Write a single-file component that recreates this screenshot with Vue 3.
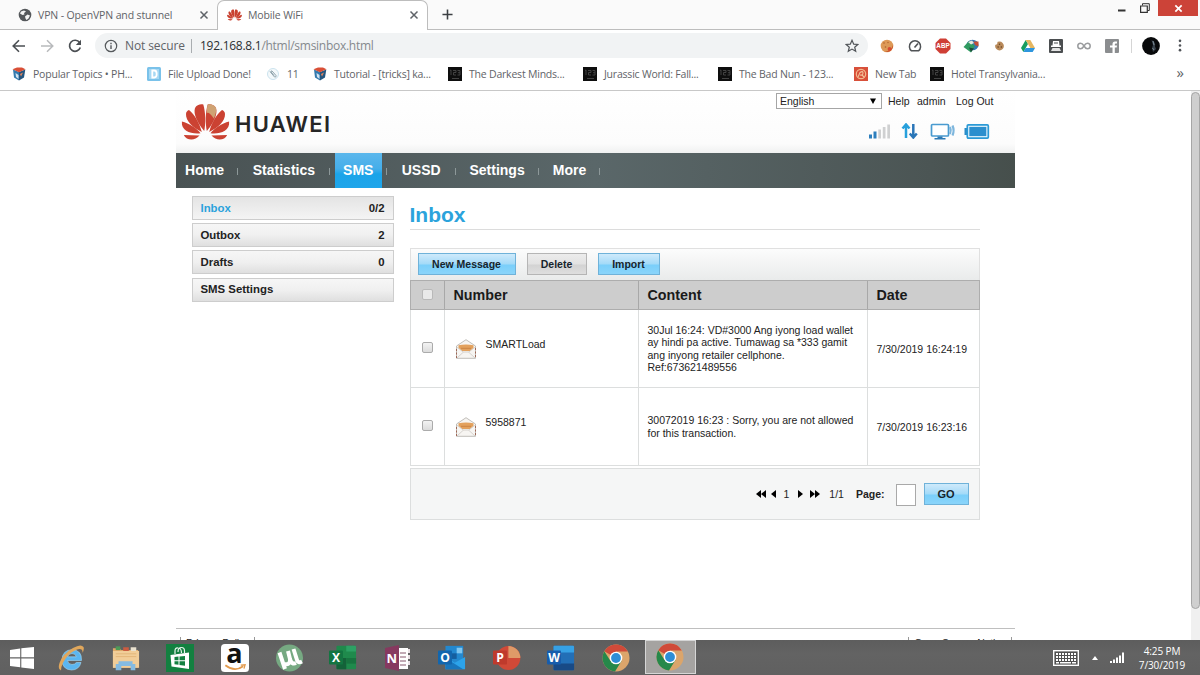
<template>
  <div class="screen">
    <!-- icon sprite -->
    <svg class="sprite">
      <symbol id="globe" viewBox="0 0 14 14">
        <circle cx="7" cy="7" r="6.3" fill="#55585b" />
        <path d="M3 3.5L6 2.5L8 3.5L6 5L6.500 6.500L4.500 7L2 5.500Z M7 8.500L9.500 6.500L12 7.500L10.500 10.500L8.500 12L7.500 10.500Z" fill="#f4f4f4" />
      </symbol>
      <symbol id="petals" viewBox="0 0 48 38">
        <g id="petal-half">
          <path d="M22.700 28C16 20 11.500 11 13.500 5C15 1.800 19 .8 21.800 1.500C24.300 10 24.200 21 22.700 28Z" />
          <path d="M20.300 29C12 25 4 18 4.500 11C4.500 9 6 7.500 7.500 7C13.500 12 18 20 20.300 29Z" />
          <path d="M19 30.300C10 31.500 -.5 28 .3 18.500C8 20.500 15 25 19 30.300Z" />
          <path d="M18 32.500L2.300 32C5 37.500 13 38.500 18 32.500Z" />
        </g>
        <use href="#petal-half" transform="translate(48 0) scale(-1 1)" />
      </symbol>
      <symbol id="cross" viewBox="0 0 10 10">
        <path d="M1.500 1.500L8.500 8.500M8.500 1.500L1.500 8.500" stroke="#5f6368" stroke-width="1.500" />
      </symbol>
      <symbol id="cube" viewBox="0 0 14 14">
        <path d="M1 2.500L7 5V13.500L2 10.500Z" fill="#3479ad" />
        <path d="M7 5L13.300 2.500L12 10.500L7 13.500Z" fill="#24557f" />
        <path d="M.5 2.200L5 .5L10 .6L13.500 2.200L7 5.200Z" fill="#d94f36" />
        <path d="M3.500 6L6.500 8V12L4 10Z" fill="#cfe3f2" />
        <path d="M8 7L11 5.500L9 9.500Z" fill="#e9895f" />
      </symbol>
      <symbol id="dfile" viewBox="0 0 14 14">
        <rect width="14" height="14" rx="1.500" fill="#7ac2ea" />
        <rect x="2" y="2" width="10" height="10" fill="#a6d8f3" />
        <path d="M5.300 3.500H7.300C10.500 3.500 10.500 10.500 7.300 10.500H5.300Z" fill="none" stroke="#fff" stroke-width="1.800" />
      </symbol>
      <symbol id="clip" viewBox="0 0 14 14">
        <circle cx="7" cy="7" r="5.500" fill="#f4f9fb" stroke="#bfdcea" stroke-width=".8" />
        <path d="M4 4.500L8.500 10Q10.500 10.500 10 8.500L6 4Q4.500 3.500 5 5L8 8.500" fill="none" stroke="#8fa3ac" />
      </symbol>
      <symbol id="movies" viewBox="0 0 14 14">
        <rect width="14" height="14" fill="#0e0e0e" />
        <path d="M2 3.500L3 3V8M5 3.500H8V5.500H5.500V8H8M9.500 3.500H12V8H9.500M10 5.700H12M4 11.500H11" fill="none" stroke="#484848" stroke-width=".9" />
      </symbol>
      <symbol id="swirl" viewBox="0 0 14 14">
        <rect width="14" height="14" fill="#d8503a" />
        <circle cx="7" cy="7" r="4.700" fill="none" stroke="#f2b98e" stroke-width="1.200" />
        <path d="M4 10L6 5.500Q9 3.500 9 6T6 8M8 8L10 10" fill="none" stroke="#f2c29a" stroke-width="1.100" />
      </symbol>

      <!-- extensions -->
      <symbol id="cookie" viewBox="0 0 14 14">
        <circle cx="7" cy="7" r="6.300" fill="#dd9a58" />
        <path d="M13 6A6.300 6.300 0 0 1 5 12.800Q11 12 13 6" fill="#c8582e" />
        <g fill="#b0622c"><circle cx="4" cy="4" r=".8" /><circle cx="8" cy="3.500" r=".7" /><circle cx="5.500" cy="8" r=".8" /></g>
        <circle cx="9.500" cy="10" r="1.900" fill="#d64a32" />
      </symbol>
      <symbol id="gauge" viewBox="0 0 14 14">
        <path d="M3.500 11.800A5.600 5.600 0 1 1 10.500 11.800Z" fill="none" stroke="#505356" stroke-width="1.500" />
        <path d="M6.500 8.500L10 4.500" stroke="#505356" stroke-width="1.700" />
      </symbol>
      <symbol id="abp" viewBox="0 0 16 16">
        <path d="M5 .5H11L15.500 5V11L11 15.500H5L.5 11V5Z" fill="#cf3f35" />
        <text x="8" y="10.400" text-anchor="middle" font-size="6.300" font-weight="700" fill="#fff" font-family="Liberation Sans, sans-serif">ABP</text>
      </symbol>
      <symbol id="idm" viewBox="0 0 16 14">
        <ellipse cx="9.500" cy="6" rx="6" ry="5.300" fill="#3678b2" />
        <path d="M.5 8L6 2L12 7L8 13.500Z" fill="#2f9a61" />
        <path d="M5 3L9 1.500L11 4L8 5.500Z" fill="#e6e8de" />
        <path d="M10.500 2.500H15.500V7.500L12 6Z" fill="#c44e37" />
        <path d="M6 8.500L11 9.500L8 13Z" fill="#1d4b39" />
      </symbol>
      <symbol id="bite" viewBox="0 0 12 12">
        <circle cx="6" cy="6" r="4.800" fill="#b98a5a" />
        <circle cx="1.800" cy="2.500" r="2" fill="#fff" />
        <g fill="#634020"><circle cx="6" cy="4" r=".8" /><circle cx="4.500" cy="7" r=".8" /><circle cx="8" cy="7" r=".8" /></g>
      </symbol>
      <symbol id="drive" viewBox="0 0 14 13">
        <path d="M4.700 .5L0 8.500L2.400 12.500L7 4.400Z" fill="#189d5d" />
        <path d="M4.700 .5H9.300L14 8.500H9.300Z" fill="#e5b660" />
        <path d="M4.700 8.500H14L11.700 12.500H2.400Z" fill="#2e96de" />
      </symbol>
      <symbol id="spy" viewBox="0 0 14 14">
        <rect width="14" height="14" rx="1" fill="#4b4e50" />
        <path d="M4 2H10L10.500 6.500H12V8H2V6.500H3.500Z" fill="#fff" />
        <path d="M5 4H9" stroke="#4b4e50" />
        <path d="M2 12L3.500 9H10.500L12 12Z" fill="#e4e4e4" />
      </symbol>
      <symbol id="infinity" viewBox="0 0 14 8">
        <path d="M7 4C5.500 1.500 4.800 1.200 3.600 1.200A2.700 2.700 0 0 0 3.600 6.800C4.800 6.800 5.500 6.500 7 4S9.200 1.200 10.400 1.200A2.700 2.700 0 0 1 10.400 6.800C9.200 6.800 8.500 6.500 7 4Z" fill="none" stroke="#9a9c9e" stroke-width="1.500" />
      </symbol>
      <symbol id="fb" viewBox="0 0 14 14">
        <rect width="14" height="14" rx="1" fill="#8b8d8f" />
        <path d="M7.500 14V8.500H5V6.500H7.500V5Q7.500 2.500 10 2.500H12V4.500H10.800Q9.800 4.500 9.800 5.500V6.500H12L11.700 8.500H9.800V14Z" fill="#fff" />
      </symbol>

      <!-- taskbar -->
      <symbol id="ie" viewBox="0 0 28 28">
        <path d="M24.500 16.500H10.500Q11 20.500 15 20.500Q18 20.500 19.300 18.500H24Q22 26 14.500 26Q5 25.500 5 15.800Q5.500 6 15 5.700Q25 6 24.500 16.500ZM10.500 12.800H19.300Q18.500 9.500 15 9.500T10.500 12.800Z" fill="#5bb6f0" stroke="#a5daf7" stroke-width=".6" />
        <path d="M4 26.500Q.5 25.500 2.500 19Q6 9.500 16 4Q24 -.5 26.500 3Q27.500 5 25.500 9Q26 5 22.500 5Q18 5 11 11.500Q4 19.500 4 26.500Z" fill="#e0a75c" />
      </symbol>
      <symbol id="folder" viewBox="0 0 30 27">
        <path d="M1 3H8L10 5H28V24H1Z" fill="#dfa968" />
        <path d="M4 1H9V5H4Z" fill="#4d9a57" /><path d="M12 2H18V6H12Z" fill="#cb5c41" /><path d="M20 2H26V6H20Z" fill="#e9e1cf" />
        <path d="M1 6H29V24H1Z" fill="#f1cd98" />
        <path d="M4 9H26M4 12H26" stroke="#dfae70" stroke-width=".8" />
        <path d="M4 26.500V20Q4 20 7 20V17H22V20H25V26.500H20V22H10V26.500Z" fill="#85bbe2" />
      </symbol>
      <symbol id="store" viewBox="0 0 28 28">
        <rect width="28" height="28" fill="#138040" />
        <path d="M9 10V7Q9 3.500 12 4Q15.500 4 15.500 9M12 8Q12 3.500 15.500 3.500Q18.500 3.500 18.500 7V9" fill="none" stroke="#e9f3ec" stroke-width="1.200" />
        <path d="M4.500 11L23 8.500V25L5.500 22.500Z" fill="#fff" />
        <path d="M8.500 13L12.500 12.600V16.200H8.500ZM13.500 12.500L19 12V16.200H13.500ZM8.500 17.200H12.500V20.800L8.500 20.300ZM13.500 17.200H19V21.800L13.500 21Z" fill="#138040" />
      </symbol>
      <symbol id="amazon" viewBox="0 0 29 29">
        <rect width="29" height="29" rx="4" fill="#fff" />
        <text x="14" y="20" text-anchor="middle" font-size="28" font-weight="700" fill="#111" font-family="Open Sans, sans-serif">a</text>
        <path d="M4.500 22Q14 29.500 23 23" fill="none" stroke="#e29a4c" stroke-width="1.800" />
        <path d="M20.500 21.800L25 21.500L23.800 25.500" fill="none" stroke="#e29a4c" stroke-width="1.300" />
      </symbol>
      <symbol id="utorrent" viewBox="0 0 28 28">
        <circle cx="14.500" cy="14" r="13.500" fill="#76a982" />
        <path d="M4.500 8.500L10 25M9 20Q15.500 21.500 15 15L13 7M15 15Q16.500 21 21 19M18.500 5L22 16Q23 19.500 27 17.500" fill="none" stroke="#fff" stroke-width="4" />
      </symbol>
      <symbol id="excel" viewBox="0 0 30 28">
        <rect x="8" y="1" width="21" height="25" rx="1" fill="#1f8a4c" />
        <path d="M18.500 1H28Q29 1 29 2V7H18.500Z" fill="#2da164" /><path d="M8 14H18.500V26H9Q8 26 8 25Z" fill="#146239" /><path d="M18.500 14H29V20H18.500Z" fill="#187440" />
        <rect y="6" width="15" height="15" rx="1" fill="#137541" />
        <text x="7.500" y="17.800" text-anchor="middle" class="letter">X</text>
      </symbol>
      <symbol id="onenote" viewBox="0 0 28 28">
        <path d="M14 4H24V25H14Z" fill="#fff" /><path d="M16 9H22M16 13H22M16 17H22M16 21H22" stroke="#86566c" />
        <path d="M24 5H26V9H24ZM24 11H26V15H24ZM24 17H26V21H24Z" fill="#e8dfe4" />
        <path d="M1 4L15 1V27L1 24Z" fill="#86395f" />
        <text x="7.700" y="18.600" text-anchor="middle" class="letter">N</text>
      </symbol>
      <symbol id="outlook" viewBox="0 0 30 28">
        <rect x="8" y="1" width="19" height="20" fill="#2388cf" /><path d="M20 3H26V9H20Z" fill="#80c5ef" /><path d="M14 9H20V15H14Z" fill="#155e9f" />
        <path d="M8 13L18 19L29 13V26H8Z" fill="#2ca3ea" /><path d="M8 14L27 26H8Z" fill="#1976bd" />
        <rect y="6" width="15" height="15" rx="1" fill="#1266ae" />
        <text x="7.500" y="17.800" text-anchor="middle" class="letter">O</text>
      </symbol>
      <symbol id="powerpoint" viewBox="0 0 30 28">
        <circle cx="16.500" cy="14" r="12.800" fill="#d04937" /><path d="M16.500 1.200A12.800 12.800 0 0 1 29.300 14H16.500Z" fill="#df9a68" />
        <rect y="6" width="15" height="15" rx="1" fill="#bf3a2c" />
        <text x="7.700" y="17.800" text-anchor="middle" class="letter">P</text>
      </symbol>
      <symbol id="word" viewBox="0 0 30 28">
        <rect x="7" y="1" width="22" height="26" rx="1" fill="#226fb7" /><path d="M7 2Q7 1 8 1H28Q29 1 29 2V8H7Z" fill="#36a1e5" /><path d="M7 20H29V26Q29 27 28 27H8Q7 27 7 26Z" fill="#184a86" />
        <rect y="6" width="15" height="15" rx="1" fill="#175dac" />
        <text x="7.500" y="17.800" text-anchor="middle" class="letter">W</text>
      </symbol>
      <symbol id="chrome" viewBox="0 0 28 28">
        <circle cx="14" cy="14" r="13.500" fill="#dba56b" />
        <path d="M14 14L2.300 7.200A13.500 13.500 0 0 1 25.800 7.500H14Z" fill="#d04a39" />
        <path d="M14 14L8.500 17L2.300 7.200A13.500 13.500 0 0 0 13 27.500L19.500 17Z" fill="#26884a" />
        <circle cx="14" cy="14" r="6.300" fill="#fff" /><circle cx="14" cy="14" r="4.900" fill="#2e8ed6" />
      </symbol>
      <symbol id="envelope" viewBox="0 0 20 20">
        <path d="M.5 7L10 .7L19.500 7V19.300H.5Z" fill="#f7f5f2" stroke="#b9b5b1" stroke-width=".9" />
        <path d="M2.500 6.300Q10 4.500 17.500 6.300V9L14 12H6L2.500 9Z" fill="#e3a15d" />
        <path d="M5.500 9.300H14.500" stroke="#b5682b" stroke-dasharray="1 1" />
        <path d="M.7 8L7.500 13.200M19.300 8L12.500 13.200M1 19L7.500 13H12.500L19 19" fill="none" stroke="#cdc9c4" stroke-width=".8" />
        <path d="M.5 10V19M19.500 9V19" stroke="#9b5d49" stroke-dasharray="2 1.500" stroke-width=".9" />
      </symbol>
    </svg>

    <!-- tab strip -->
    <div class="tabstrip">
      <div class="tab">
        <svg class="fav"><use href="#globe" /></svg>
        <span class="tab-title">VPN - OpenVPN and stunnel</span>
        <svg class="tab-close"><use href="#cross" /></svg>
      </div>
      <div class="tab active">
        <svg class="fav red"><use href="#petals" /></svg>
        <span class="tab-title">Mobile WiFi</span>
        <svg class="tab-close"><use href="#cross" /></svg>
      </div>
      <svg class="new-tab" viewBox="0 0 12 12"><path d="M6 .5V11.500M.5 6H11.500" stroke="#3c4043" stroke-width="1.700" /></svg>
      <div class="win-controls">
        <svg class="win-min" viewBox="0 0 8 12"><path d="M0 10.500H7.500" stroke="#333" stroke-width="2" /></svg>
        <svg class="win-max" viewBox="0 0 10 10"><path d="M2.500 2.500V.7H9.300V7.500H7.500" fill="none" stroke="#333" /><path d="M.6 3H7.300V9.300H.6Z" fill="none" stroke="#333" stroke-width="1.200" /></svg>
        <div class="win-close">
          <svg viewBox="0 0 10 10"><path d="M1.500 1.500L8.500 8.500M8.500 1.500L1.500 8.500" stroke="#fff" stroke-width="1.900" /></svg>
        </div>
      </div>
    </div>

    <!-- address bar -->
    <div class="toolbar">
      <svg class="tool" viewBox="0 0 14 14"><path d="M13 7H1.500M7 1.200L1.200 7L7 12.800" fill="none" stroke="#4b4f53" stroke-width="1.600" /></svg>
      <svg class="tool" viewBox="0 0 14 14"><path d="M1 7H12.500M7 1.200L12.800 7L7 12.800" fill="none" stroke="#b8babc" stroke-width="1.500" /></svg>
      <svg class="tool" viewBox="0 0 14 14"><path d="M11.600 3.600A5.500 5.500 0 1 0 12.300 8.500" fill="none" stroke="#4b4f53" stroke-width="1.700" /><path d="M13 .8V6H7.800Z" fill="#4b4f53" /></svg>
      <div class="omnibox">
        <svg class="info" viewBox="0 0 14 14"><circle cx="7" cy="7" r="5.700" fill="none" stroke="#55595c" stroke-width="1.200" /><path d="M7 6.200V10M7 3.800V5.200" stroke="#55595c" stroke-width="1.400" /></svg>
        <span class="insecure">Not secure</span>
        <span class="bar"></span>
        <span class="url">192.168.8.1<i>/html/smsinbox.html</i></span>
        <svg class="star" viewBox="0 0 14 14"><path d="M7 1.300L8.700 5.200L12.800 5.500L9.700 8.200L10.700 12.300L7 10.100L3.300 12.300L4.300 8.200L1.200 5.500L5.300 5.200Z" fill="none" stroke="#505458" stroke-width="1.200" /></svg>
      </div>
      <div class="extensions">
        <span v-for="ext in extensions" :key="ext" class="ext"><svg :class="ext"><use :href="'#' + ext" /></svg></span>
      </div>
      <span class="divider"></span>
      <svg class="avatar" viewBox="0 0 18 18"><circle cx="9" cy="9" r="8.900" fill="#08090b" /><path d="M9.500 3Q14 5 13 9.500L14 12L11 15L10 11L11 8Z" fill="#39424c" /><path d="M11 4L12 8M10.500 11L12 13" stroke="#7c8b96" /></svg>
      <svg class="menu" viewBox="0 0 4 14"><g fill="#505458"><circle cx="2" cy="2" r="1.400" /><circle cx="2" cy="7" r="1.400" /><circle cx="2" cy="12" r="1.400" /></g></svg>
    </div>

    <!-- bookmarks -->
    <div class="bookmarks">
      <div v-for="mark in bookmarks" :key="mark.title" class="bookmark" :style="{ width: mark.width + 'px' }">
        <svg><use :href="'#' + mark.icon" /></svg>
        <span>{{ mark.title }}</span>
      </div>
      <span class="overflow">»</span>
    </div>

    <!-- page -->
    <div class="viewport">
      <div class="page">
        <header class="header">
          <div class="brand">
            <svg class="brand-mark" viewBox="0 0 48 38">
              <use href="#petals" width="48" height="38" />
              <path d="M25.300 10C25.300 6 25.700 3.500 26.200 1.500C29 .8 33 1.800 34.500 5C35.300 8 34 12 32.300 15.500Q28 9 25.300 10Z" fill="#cfa273" />
            </svg>
            <span class="brand-name">HUAWEI</span>
          </div>
          <div class="header-right">
            <div class="links">
              <div class="lang"><span>English</span><svg viewBox="0 0 6 6"><path d="M0 .5H6L3 6Z" /></svg></div>
              <a class="help">Help</a><a class="user">admin</a><a>Log Out</a>
            </div>
            <div class="status">
              <svg class="signal" viewBox="0 0 22 15">
                <path d="M0 10.500H3V14.500H0ZM4.500 7.500H7.500V14.500H4.500Z" fill="#2d7fbd" />
                <path d="M9.300 5.500H12V14.500H9.300ZM13.800 3H16.500V14.500H13.800ZM18.300 .5H21V14.500H18.300Z" fill="#cfd0d1" />
              </svg>
              <svg class="traffic" viewBox="0 0 16 16"><path d="M4.500 15V3M1 5.500L4.500 1.500L8 5.500" fill="none" stroke="#27a0dc" stroke-width="2.500" /><path d="M11.800 1V13M8.300 10.500L11.800 14.500L15.300 10.500" fill="none" stroke="#2a76b8" stroke-width="2.500" /></svg>
              <svg class="wlan" viewBox="0 0 25 17"><rect x="1" y="1.500" width="17" height="11.500" rx="1" fill="#fff" stroke="#4a9bd0" stroke-width="1.700" /><path d="M7 13.500H12V15H15V16.500H4V15H7Z" fill="#2c79b4" /><path d="M19.500 4Q21 7.500 19.500 11M22 2.500Q24.200 7.500 22 12.500" fill="none" stroke="#7db6dd" stroke-width="2.200" /></svg>
              <svg class="battery" viewBox="0 0 25 15"><path d="M0 4H2.500V11H0Z" fill="#2b8cc8" /><rect x="2.800" y=".9" width="21" height="13.200" rx="1" fill="#e6f4fc" stroke="#2b9ad6" stroke-width="1.700" /><rect x="4.800" y="2.900" width="17" height="9.200" fill="#2b8fce" /></svg>
            </div>
          </div>
        </header>

        <nav class="nav">
          <template v-for="item in menu" :key="item.label">
            <div class="nav-item" :class="{ current: item.label === 'SMS' }" :style="{ width: item.width + 'px' }">{{ item.label }}</div>
            <span class="nav-sep"></span>
          </template>
        </nav>

        <div class="body">
          <aside class="side">
            <div v-for="box in boxes" :key="box.label" class="side-item" :class="{ selected: box.label === current }" @click="current = box.label">
              <span>{{ box.label }}</span><span>{{ box.count }}</span>
            </div>
          </aside>

          <main class="content">
            <h1>Inbox</h1>
            <div class="actions">
              <button class="btn blue new">New Message</button>
              <button class="btn gray">Delete</button>
              <button class="btn blue import">Import</button>
            </div>
            <div class="row head">
              <div class="cell check"><span class="box"></span></div>
              <div class="cell">Number</div>
              <div class="cell">Content</div>
              <div class="cell">Date</div>
            </div>
            <div v-for="msg in messages" :key="msg.number" class="row">
              <div class="cell check"><span class="box"></span></div>
              <div class="cell number"><svg><use href="#envelope" /></svg><span>{{ msg.number }}</span></div>
              <div class="cell text">{{ msg.content }}</div>
              <div class="cell">{{ msg.date }}</div>
            </div>
            <div class="pager">
              <svg class="dbl" viewBox="0 0 10 8"><path d="M5 0V8L0 4ZM10 0V8L5 4Z" /></svg>
              <svg class="sgl" viewBox="0 0 5 8"><path d="M5 0V8L0 4Z" /></svg>
              <span class="num">1</span>
              <svg class="sgl" viewBox="0 0 5 8"><path d="M0 0V8L5 4Z" /></svg>
              <svg class="dbl next" viewBox="0 0 10 8"><path d="M0 0V8L5 4ZM5 0V8L10 4Z" /></svg>
              <span class="total">1/1</span>
              <b>Page:</b>
              <input v-model="page" />
              <button class="btn blue go">GO</button>
            </div>
          </main>
        </div>

        <footer class="footer">
          <span>Privacy Policy</span>
          <span>Open Source Notice</span>
        </footer>
      </div>
      <div class="scroll"><div class="thumb"></div></div>
    </div>

    <!-- taskbar -->
    <div class="taskbar">
      <div class="start">
        <svg viewBox="0 0 24 22"><path d="M0 3L10.200 1.500V10.300H0ZM11.300 1.300L24 0V10.300H11.300ZM0 11.400H10.200V20.300L0 19ZM11.300 11.400H24V22L11.300 20.500Z" fill="#fff" /></svg>
      </div>
      <div v-for="(app, i) in apps" :key="i" class="app" :class="{ running: i === apps.length - 1 }">
        <svg><use :href="'#' + app" /></svg>
      </div>
      <div class="tray">
        <svg class="keyboard" viewBox="0 0 26 16"><rect x=".7" y=".7" width="24.600" height="14.600" fill="#505050" stroke="#fff" stroke-width="1.400" /><path d="M3 4H23M3 7H23M3 10H23" stroke="#fff" stroke-width="2" stroke-dasharray="2 1" /><path d="M3 12.800H6M7 12.800H18M19 12.800H23" stroke="#fff" stroke-width="1.600" /></svg>
        <svg class="up" viewBox="0 0 6 4"><path d="M0 4L3 0L6 4Z" fill="#fff" /></svg>
        <svg class="net" viewBox="0 0 14 12"><path d="M0 9H2V11H0ZM3 7.500H5V11H3ZM6 5.500H8V11H6ZM9 3.500H11V11H9ZM12 .5H14V11H12Z" fill="#fff" /></svg>
        <div class="clock"><span>4:25 PM</span><span>7/30/2019</span></div>
      </div>
    </div>
  </div>
</template>

<script setup>
import { ref } from 'vue'

const current = ref('Inbox')
const page = ref('')

const extensions = ['cookie', 'gauge', 'abp', 'idm', 'bite', 'drive', 'spy', 'infinity', 'fb']

const bookmarks = [
  { title: 'Popular Topics • PH...', icon: 'cube', width: 135 },
  { title: 'File Upload Done!', icon: 'dfile', width: 119 },
  { title: '11', icon: 'clip', width: 47 },
  { title: 'Tutorial - [tricks] ka...', icon: 'cube', width: 135 },
  { title: 'The Darkest Minds...', icon: 'movies', width: 135 },
  { title: 'Jurassic World: Fall...', icon: 'movies', width: 135 },
  { title: 'The Bad Nun - 123...', icon: 'movies', width: 136 },
  { title: 'New Tab', icon: 'swirl', width: 76 },
  { title: 'Hotel Transylvania...', icon: 'movies', width: 135 }
]

const menu = [
  { label: 'Home', width: 57 },
  { label: 'Statistics', width: 81 },
  { label: 'SMS', width: 47 },
  { label: 'USSD', width: 58 },
  { label: 'Settings', width: 73 },
  { label: 'More', width: 51 }
]

const boxes = [
  { label: 'Inbox', count: '0/2' },
  { label: 'Outbox', count: '2' },
  { label: 'Drafts', count: '0' },
  { label: 'SMS Settings', count: '' }
]

const messages = [
  {
    number: 'SMARTLoad',
    content: '30Jul 16:24: VD#3000 Ang iyong load wallet\nay hindi pa active. Tumawag sa *333 gamit\nang inyong retailer cellphone.\nRef:673621489556',
    date: '7/30/2019 16:24:19'
  },
  {
    number: '5958871',
    content: '30072019 16:23 : Sorry, you are not allowed\nfor this transaction.',
    date: '7/30/2019 16:23:16'
  }
]

const apps = ['ie', 'folder', 'store', 'amazon', 'utorrent', 'excel', 'onenote', 'outlook', 'powerpoint', 'word', 'chrome', 'chrome']
</script>

<style>
body {
  background: #fff;
}
</style>

<style scoped>
.screen {
  display: flex;
  flex-direction: column;
  width: 1200px;
  height: 675px;
  overflow: hidden;
  background: #fff;
  font-family: "Open Sans", "Noto Sans", sans-serif;
  font-size: 10.5px;
  color: #5f6368;
}

.screen * {
  box-sizing: border-box;
}

svg {
  flex-shrink: 0;
  display: block;
}

.sprite {
  display: none;
}

.letter {
  font: 700 13px "Open Sans", sans-serif;
  fill: #fff;
}

/* tab strip */
.tabstrip {
  display: flex;
  height: 30px;
  flex-shrink: 0;
  background: #fafafa;
  border-bottom: 1px solid #bdbdbd;
}

.tab {
  display: flex;
  align-items: center;
  width: 217px;
  height: 29px;
  padding: 0 8px 0 18px;
}

.tab.active {
  width: 211px;
  height: 30px;
  padding: 0 8px 1px 9px;
  background: #fff;
  border: 1px solid #bdbdbd;
  border-bottom: none;
  border-radius: 7px 7px 0 0;
}

.fav {
  width: 14px;
  height: 14px;
}

.fav.red {
  width: 15px;
  fill: #c9402f;
}

.tab-title {
  flex: 1;
  margin-left: 6px;
  letter-spacing: -0.13px;
  white-space: nowrap;
}

.tab-close {
  width: 10px;
  height: 10px;
}

.new-tab {
  width: 11px;
  height: 11px;
  margin: 9px 0 0 14px;
}

.win-controls {
  display: flex;
  margin-left: auto;
  margin-right: 2px;
}

.win-min {
  width: 8px;
  height: 12px;
  margin-right: 14px;
}

.win-max {
  width: 10px;
  height: 10px;
  margin: 3px 8px 0 0;
}

.win-close {
  display: flex;
  align-items: center;
  justify-content: center;
  width: 40px;
  height: 16px;
  background: #cc4338;
}

.win-close svg {
  width: 9px;
  height: 9px;
}

/* address bar */
.toolbar {
  display: flex;
  align-items: center;
  height: 31px;
  flex-shrink: 0;
  padding-left: 12px;
}

.tool {
  width: 14px;
  height: 14px;
  margin-right: 14px;
}

.tool:nth-child(3) {
  margin-right: 13px;
}

.omnibox {
  display: flex;
  align-items: center;
  width: 773px;
  height: 25px;
  padding: 0 9px 0 9px;
  border-radius: 13px;
  background: #f1f3f4;
  font-size: 12px;
}

.info {
  width: 14px;
  height: 14px;
}

.insecure {
  width: 60px;
  margin-left: 7px;
  letter-spacing: -0.1px;
  white-space: nowrap;
}

.bar {
  width: 1px;
  height: 14px;
  margin: 0 8px 0 6px;
  background: #a9adb0;
}

.url {
  color: #2b2e31;
  letter-spacing: -0.27px;
}

.url i {
  font-style: normal;
  color: #85898d;
}

.star {
  width: 14px;
  height: 14px;
  margin-left: auto;
}

.extensions {
  display: flex;
  margin-left: 5px;
}

.ext {
  display: flex;
  align-items: center;
  justify-content: center;
  width: 28.1px;
}

.ext svg {
  width: 14px;
  height: 14px;
}

.ext .abp,
.ext .idm {
  width: 16px;
  height: 16px;
}

.ext .bite {
  width: 11px;
}

.divider {
  width: 1px;
  height: 14px;
  margin-left: 5px;
  background: #d5d5d5;
}

.avatar {
  width: 18px;
  height: 18px;
  margin-left: 10px;
}

.menu {
  width: 4px;
  height: 13px;
  margin-left: 18px;
}

/* bookmarks */
.bookmarks {
  display: flex;
  align-items: center;
  height: 30px;
  flex-shrink: 0;
  padding: 0 0 4px 12px;
  border-bottom: 1px solid #c8c8c8;
}

.bookmark {
  display: flex;
  align-items: center;
  gap: 7px;
  flex-shrink: 0;
  letter-spacing: -0.21px;
  white-space: nowrap;
}

.bookmark svg {
  width: 14px;
  height: 14px;
}

.overflow {
  margin: -2px 16px 0 auto;
  font-size: 15px;
  line-height: 15px;
}

/* page */
.viewport {
  display: flex;
  height: 549px;
  flex-shrink: 0;
  overflow: hidden;
  font-family: "Liberation Sans", Arial, sans-serif;
  color: #222;
}

.page {
  display: flex;
  flex-direction: column;
  width: 839px;
  margin-left: 176px;
}

.header {
  display: flex;
  justify-content: space-between;
  height: 62px;
  flex-shrink: 0;
  background: linear-gradient(#fff, #fcfcfc 85%, #f0f1f1);
}

.brand {
  display: flex;
  padding: 12px 0 0 5px;
}

.brand-mark {
  width: 49px;
  height: 38px;
  fill: #cb4232;
}

.brand-name {
  margin: 8px 0 0 5px;
  font: 600 22px/27px Inter, sans-serif;
  letter-spacing: 1.3px;
  color: #262626;
}

.header-right {
  width: 239px;
}

.links {
  display: flex;
  align-items: center;
  height: 15px;
  margin-top: 2px;
}

.lang {
  display: flex;
  align-items: center;
  justify-content: space-between;
  width: 106px;
  height: 16px;
  padding: 0 5px 0 3px;
  margin-right: 6px;
  border: 1px solid #a5a5a5;
  background: #fff;
}

.lang svg {
  width: 6px;
  height: 6px;
}

.help {
  width: 29px;
}

.user {
  width: 39px;
}

.status {
  display: flex;
  align-items: center;
  height: 18px;
  margin: 14px 0 0 93px;
}

.signal {
  width: 22px;
  height: 15px;
}

.traffic {
  width: 17px;
  height: 16px;
  margin-left: 10px;
}

.wlan {
  width: 26px;
  height: 17px;
  margin-left: 12px;
}

.battery {
  width: 26px;
  height: 15px;
  margin-left: 8px;
}

/* navigation */
.nav {
  display: flex;
  height: 35px;
  flex-shrink: 0;
  background: linear-gradient(90deg, #495253, #5a6769 50%, #4b5554 90%, #464f4c);
  color: #fff;
  font-size: 14px;
  font-weight: 700;
  line-height: 34px;
}

.nav-item {
  text-align: center;
}

.nav-item.current {
  background: linear-gradient(#5bb7ec, #45aeea 45%, #1ba4e9 60%, #1fa5ea);
}

.nav-sep {
  width: 1px;
  height: 7px;
  margin: 15px 5px 0 4.4px;
  background: #8d9899;
}

/* body */
.body {
  display: flex;
  gap: 16px;
  padding: 8px 0 0 15.5px;
}

.side {
  display: flex;
  flex-direction: column;
  gap: 3.2px;
  width: 202px;
}

.side-item {
  display: flex;
  align-items: center;
  justify-content: space-between;
  height: 24px;
  padding: 0 8px 1px;
  border: 1px solid #cdcdcd;
  background: linear-gradient(#f6f6f6, #f0f0f0 50%, #dfdfdf);
  font-size: 11.4px;
  font-weight: 700;
}

.side-item.selected {
  background: linear-gradient(#e4e4e4, #f4f4f4);
}

.side-item.selected span:first-child {
  color: #2aa2dc;
}

.content {
  width: 570px;
}

h1 {
  height: 34px;
  margin: 0 0 18px;
  border-bottom: 1px solid #dcdcdc;
  font-size: 21px;
  line-height: 38px;
  color: #2ba3dc;
}

.actions {
  display: flex;
  height: 32px;
  padding: 4px 7px;
  border: 1px solid #e0e0e0;
  border-bottom: none;
  background: linear-gradient(#fcfcfc, #e9ebeb);
}

.btn {
  height: 22px;
  padding: 0;
  border: 1px solid #6fb2d9;
  font: 700 10.5px "Liberation Sans", Arial, sans-serif;
  color: #17242c;
}

.btn.blue {
  background: linear-gradient(#cfeafb, #a3daf8 50%, #7acffa 55%, #8ad4fa);
}

.btn.gray {
  width: 60px;
  margin: 0 11px;
  border-color: #b5b5b5;
  background: linear-gradient(#ececec, #e2e2e2 50%, #d3d3d3 55%, #dedede);
}

.new {
  width: 98px;
}

.import {
  width: 62px;
}

.row {
  display: grid;
  grid-template-columns: 34px 194px 229px 112px;
  height: 78px;
  border-left: 1px solid #dcdede;
  border-bottom: 1px solid #dcdede;
}

.row.head {
  height: 30px;
  border: 1px solid #adadad;
  background: #cdcdcd;
  font-size: 14.3px;
  font-weight: 700;
  color: #1a1a1a;
}

.cell {
  display: flex;
  align-items: center;
  padding-left: 9px;
  border-right: 1px solid #dcdede;
  white-space: nowrap;
}

.head .cell {
  border-color: #a8a8a8;
}

.head .cell:last-child {
  border-right: none;
}

.check {
  padding-left: 11px;
}

.box {
  width: 11px;
  height: 11px;
  margin-bottom: 2px;
  border: 1px solid #ababab;
  border-radius: 2px;
  background: linear-gradient(#f3f3f3, #dcdcdc);
}

.head .box {
  border-color: #b9b9b9;
  background: #e9e9e9;
}

.number {
  gap: 10px;
  padding-left: 11px;
}

.number svg {
  width: 20px;
  height: 20px;
  margin-top: 1px;
}

.number span {
  margin-bottom: 9px;
}

.text {
  white-space: pre;
  line-height: 12.3px;
}

.pager {
  display: flex;
  align-items: center;
  height: 52px;
  margin-top: 2px;
  padding: 0 0 1px 345px;
  border: 1px solid #dcdede;
  background: #f5f6f6;
}

.dbl {
  width: 10px;
  height: 8px;
}

.next {
  margin-left: 2px;
}

.sgl {
  width: 5px;
  height: 8px;
  margin: 0 5px;
}

.num {
  margin: 0 4px 0 3px;
}

.total {
  margin-left: 9px;
}

.pager b {
  margin-left: 12px;
}

.pager input {
  width: 20px;
  height: 22px;
  margin: 3px 8px 0 11px;
  padding: 0;
  border: 1px solid #a9a9a9;
  background: #fff;
}

.go {
  width: 45px;
  font-size: 11px;
}

.footer {
  display: flex;
  justify-content: space-between;
  flex-shrink: 0;
  height: 12px;
  margin-top: auto;
  padding: 8px 3px 0 4px;
  border-top: 1px solid #bfbfbf;
  overflow: hidden;
  letter-spacing: -0.15px;
}

.footer span {
  padding: 0 5px;
  border-left: 1px solid #999;
  border-right: 1px solid #999;
  line-height: 13px;
  height: 13px;
}

.scroll {
  width: 9px;
  margin-left: auto;
  background: #f0f0f0;
}

.thumb {
  height: 517px;
  margin-top: 1px;
  border: 1px solid #a6a6a6;
  border-radius: 5px;
  background: #cfcfcf;
}

/* taskbar */
.taskbar {
  display: flex;
  height: 35px;
  flex-shrink: 0;
  background: linear-gradient(#5d5d5d, #636363 40%, #606060);
}

.start {
  display: flex;
  align-items: center;
  width: 43.8px;
  padding-left: 10px;
}

.start svg {
  width: 24px;
  height: 22px;
}

.app {
  display: flex;
  align-items: center;
  justify-content: center;
  width: 51px;
  margin-right: 3.45px;
}

.app:nth-child(2) {
  margin-left: 1.9px;
}

.app svg {
  width: 28px;
  height: 28px;
}

.app.running {
  height: 34px;
  border: 1px solid #d6d6d6;
  background: #a5a3a1;
}

.tray {
  display: flex;
  align-items: center;
  margin-left: auto;
}

.keyboard {
  width: 26px;
  height: 16px;
}

.up {
  width: 6px;
  height: 4px;
  margin-left: 13px;
}

.net {
  width: 14px;
  height: 12px;
  margin-left: 12px;
}

.clock {
  display: flex;
  flex-direction: column;
  align-items: center;
  width: 50px;
  margin: 1px 13px 0 13px;
  color: #fff;
  font-size: 10px;
  letter-spacing: -0.1px;
  line-height: 14.5px;
}
</style>
